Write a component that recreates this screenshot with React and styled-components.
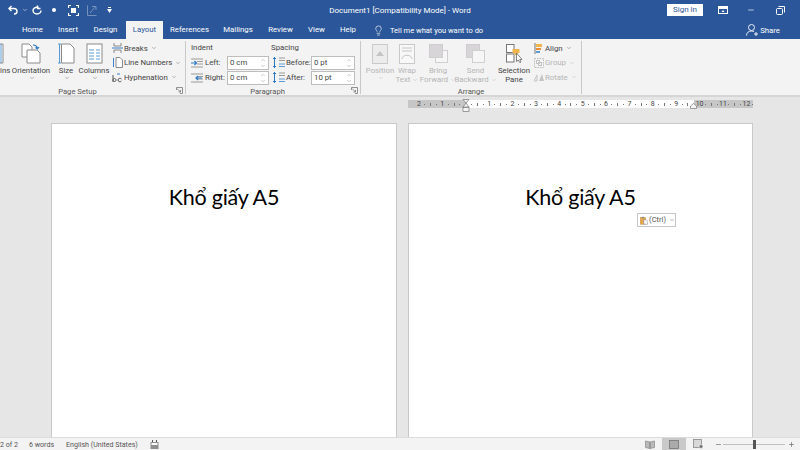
import React from 'react';
import styled, { createGlobalStyle } from 'styled-components';
import { ChevronDown, ChevronUp, Lightbulb, Minus, Plus } from 'lucide-react';

const GlobalStyle = createGlobalStyle`
  html, body { margin: 0; padding: 0; width: 800px; height: 450px; overflow: hidden; }
  body { font-family: Roboto, "Open Sans", sans-serif; font-size: 8px; color: #444; }
  * { box-sizing: border-box; }
`;

const Window = styled.div`
  width: 800px;
  height: 450px;
  display: flex;
  flex-direction: column;
  overflow: hidden;
  background: #e6e6e6;
`;

const TitleBar = styled.div`
  height: 20px;
  flex: none;
  background: #2b579a;
  color: #fff;
  display: grid;
  grid-template-columns: 1fr 180px 1fr;
  align-items: center;
`;

const Qat = styled.div`
  display: flex;
  align-items: center;
  padding-left: 8px;
  height: 100%;
`;

const QatItem = styled.div`
  width: ${p => p.$w}px;
  display: flex;
  align-items: center;
  opacity: ${p => (p.$off ? 0.35 : 1)};
`;

const DocTitle = styled.div`
  font-size: 8px;
  text-align: center;
  white-space: nowrap;
`;

const WinControls = styled.div`
  display: flex;
  align-items: center;
  justify-content: flex-end;
  height: 100%;
  padding-right: 13px;
`;

const SignIn = styled.div`
  width: 36px;
  height: 12px;
  background: #fff;
  color: #2b579a;
  font-size: 8px;
  line-height: 12px;
  text-align: center;
  margin-right: 14px;
`;

const WinBtn = styled.div`
  width: ${p => p.$w}px;
  display: flex;
  justify-content: center;
`;

const TabBar = styled.div`
  height: 19px;
  flex: none;
  background: #2b579a;
  display: flex;
  align-items: flex-end;
  padding-left: 14px;
`;

const Tab = styled.div`
  width: ${p => p.$w}px;
  height: 18px;
  line-height: 18px;
  text-align: center;
  font-size: 7.8px;
  white-space: nowrap;
  color: ${p => (p.$active ? '#2b579a' : '#fff')};
  background: ${p => (p.$active ? '#f3f3f3' : 'transparent')};
`;

const TellMe = styled.div`
  display: flex;
  align-items: center;
  gap: 6px;
  height: 18px;
  margin-left: 9px;
  color: #fff;
  font-size: 7.5px;
  white-space: nowrap;
`;

const Share = styled.div`
  margin-left: auto;
  margin-right: 20px;
  height: 18px;
  display: flex;
  align-items: center;
  gap: 1px;
  color: #fff;
  font-size: 7.8px;
`;

const Ribbon = styled.div`
  height: 58px;
  flex: none;
  background: #f3f3f3;
  border-bottom: 2px solid #d6d6d6;
  display: flex;
  overflow: hidden;
`;

const Group = styled.div`
  width: ${p => p.$w}px;
  flex: none;
  display: flex;
  flex-direction: column;
  border-right: 1px solid #c9c9c9;
  margin: 2px 0 1px;
  padding-left: ${p => p.$pl || 0}px;
`;

const GroupBody = styled.div`
  height: 45px;
  flex: none;
  display: flex;
`;

const GroupFoot = styled.div`
  height: 8px;
  position: relative;
  text-align: center;
  font-size: 7.6px;
  line-height: 11px;
  color: #555;
  padding-right: ${p => p.$pr || 0}px;
`;

const Launcher = styled.svg`
  position: absolute;
  right: 2px;
  top: 1px;
  width: 7px;
  height: 7px;
`;

const LargeBtn = styled.div`
  width: ${p => p.$w}px;
  flex: none;
  display: flex;
  flex-direction: column;
  align-items: center;
  font-size: 7.8px;
  line-height: 9.5px;
  text-align: center;
  white-space: nowrap;
  padding-top: 2px;
  color: ${p => (p.$off ? '#b5b5b5' : '#444')};
`;

const CutBtn = styled(LargeBtn)`
  align-items: flex-start;
`;

const LargeIcon = styled.div`
  height: 21px;
  display: flex;
  align-items: center;
  justify-content: center;
  margin-bottom: 1.5px;
`;

const Caret = styled(ChevronDown)`
  width: 6px;
  height: 6px;
  flex: none;
  color: ${p => (p.$off ? '#bbb' : '#777')};
  margin-left: 2px;
`;

const CaretLine = styled.div`
  display: flex;
  align-items: center;
`;

const SmallCol = styled.div`
  display: flex;
  flex-direction: column;
  margin-left: ${p => p.$ml || 0}px;
`;

const SmallBtn = styled.div`
  height: 14.5px;
  flex: none;
  display: flex;
  align-items: center;
  gap: 1px;
  font-size: 7.8px;
  white-space: nowrap;
  color: ${p => (p.$off ? '#b5b5b5' : '#444')};
`;

const FieldCol = styled.div`
  width: ${p => p.$w}px;
  flex: none;
  display: flex;
  flex-direction: column;
`;

const FieldHead = styled.div`
  height: 13px;
  line-height: 13px;
  font-size: 7.8px;
  padding-left: ${p => p.$pl || 0}px;
  margin-bottom: 1px;
`;

const FieldRow = styled.div`
  height: 15px;
  display: flex;
  align-items: center;
  font-size: 7.8px;
  gap: ${p => p.$gap || 2}px;
  padding-left: ${p => p.$pl || 0}px;
`;

const FieldLabel = styled.div`
  width: ${p => p.$w}px;
  flex: none;
  white-space: nowrap;
`;

const Spinner = styled.div`
  width: ${p => p.$w}px;
  height: 14px;
  background: #fff;
  border: 1px solid #bdbdbd;
  display: flex;
  align-items: center;
  justify-content: space-between;
  padding: 0 2px;
  font-size: 7.8px;
  color: #444;
`;

const SpinArrows = styled.div`
  display: flex;
  flex-direction: column;
  color: #777;
`;

const RulerRow = styled.div`
  position: relative;
  height: 26px;
  padding: 3px 0 0 408px;
  flex: none;
`;

const Ruler = styled.div`
  position: relative;
  width: 345px;
  height: 8px;
  background: #c6c6c6;
  display: flex;
  overflow: hidden;
`;

const RulerWhite = styled.div`
  position: absolute;
  left: 58px;
  top: 0;
  bottom: 0;
  width: 228px;
  background: #fff;
`;

const RulerScale = styled.div`
  position: relative;
  display: flex;
  margin-left: 8px;
`;

const RulerCell = styled.div`
  width: 23.4px;
  flex: none;
  display: grid;
  grid-template-columns: repeat(4, 5.85px);
  align-items: center;
  justify-items: center;
  font-size: 7px;
  line-height: 8px;
  color: #444;
`;

const Dot = styled.i`
  display: block;
  width: 1px;
  height: 1px;
  background: #777;
`;

const Tick = styled.i`
  display: block;
  width: 1px;
  height: 3px;
  background: #777;
`;

const Marker = styled.svg`
  position: absolute;
  left: ${p => p.$x}px;
  top: ${p => p.$y}px;
`;

const Workspace = styled.div`
  flex: 1;
  min-height: 0;
  display: flex;
  flex-direction: column;
  overflow: hidden;
`;

const Pages = styled.div`
  flex: 1;
  display: flex;
  gap: 11px;
  padding-left: 51px;
  min-height: 0;
  overflow: hidden;
`;

const Page = styled.div`
  position: relative;
  width: ${p => p.$w}px;
  height: 500px;
  flex: none;
  background: #fff;
  border: 1px solid #c8c8c8;
  padding-top: 59px;
  text-align: center;
  font-family: Lato, "Open Sans", sans-serif;
  font-size: 21.5px;
  letter-spacing: -0.25px;
  line-height: 28px;
  color: #000;
`;

const PasteTag = styled.div`
  position: absolute;
  left: 228px;
  top: 89px;
  width: 39px;
  height: 14px;
  background: #fff;
  border: 1px solid #c6c6c6;
  display: flex;
  align-items: center;
  gap: 1px;
  padding-left: 2px;
  font-family: Roboto, sans-serif;
  font-size: 7.5px;
  letter-spacing: 0;
  line-height: 12px;
  color: #555;
`;

const StatusBar = styled.div`
  height: 13px;
  flex: none;
  background: #f3f3f3;
  border-top: 1px solid #dcdcdc;
  display: flex;
  align-items: center;
  font-size: 7.1px;
  color: #555;
`;

const StatusText = styled.div`
  width: ${p => p.$w}px;
  flex: none;
  white-space: nowrap;
`;

const StatusRight = styled.div`
  margin-left: auto;
  height: 100%;
  padding-right: 5px;
  display: flex;
  align-items: center;
`;

const ViewBtn = styled.div`
  width: 24px;
  height: 100%;
  display: flex;
  align-items: center;
  justify-content: center;
  background: ${p => (p.$active ? '#c9c9c9' : 'transparent')};
  margin-right: ${p => p.$mr || 0}px;
`;

const Slider = styled.div`
  position: relative;
  width: 62px;
  height: 1px;
  background: #c0c0c0;
  margin: 0 3px 0 1px;
`;

const Thumb = styled.div`
  position: absolute;
  left: 30px;
  top: -4px;
  width: 3px;
  height: 9px;
  background: #555;
`;

const Launch = () => (
  <Launcher viewBox="0 0 7 7" fill="none" stroke="#777" strokeWidth="0.8">
    <path d="M.5 3V.5H6.5V6.5H4" />
    <path d="M1 1.5L4.5 5M4.5 3V5H2.5" />
  </Launcher>
);

const Spin = () => (
  <SpinArrows>
    <ChevronUp size={6} strokeWidth={1.5} />
    <ChevronDown size={6} strokeWidth={1.5} />
  </SpinArrows>
);

const OrientationIcon = () => (
  <svg width="21" height="21" viewBox="0 0 21 21" fill="none">
    <path d="M1 1H8L11 4V14H1Z" fill="#fff" stroke="#8a8a8a" />
    <path d="M6 7H16L19 10V20H6Z" fill="#fff" stroke="#8a8a8a" />
    <path d="M12 2C15 2 16 3 16.5 5.5M14.5 4.5L16.5 6L18 4" stroke="#2b79c2" strokeWidth="1.2" />
  </svg>
);

const SizeIcon = () => (
  <svg width="17" height="21" viewBox="0 0 17 21" fill="none">
    <path d="M1.5 1V20M0 1H3M0 20H3" stroke="#5a9bd5" />
    <path d="M3.5 1H12L16 5V20H3.5Z" fill="#fff" stroke="#8a8a8a" />
  </svg>
);

const ColumnsIcon = () => (
  <svg width="17" height="21" viewBox="0 0 17 21" fill="none">
    <rect x="1" y="1" width="15" height="19" fill="#fff" stroke="#8a8a8a" />
    <path d="M3 7H8M3 10H8M3 13H8M3 16H8M10 7H14M10 10H14M10 13H14M10 16H14" stroke="#5a9bd5" />
  </svg>
);

const MarginsEdge = () => (
  <svg width="4" height="21" viewBox="0 0 4 21" fill="none">
    <path d="M0 1H3V20H0" fill="#fff" stroke="#8a8a8a" />
    <path d="M1 1V20" stroke="#5a9bd5" />
  </svg>
);

const BreaksIcon = () => (
  <svg width="11" height="10" viewBox="0 0 11 10" fill="none">
    <path d="M2 0V3H9V0M2 10V7H9V10" stroke="#8a8a8a" />
    <path d="M0 5H11" stroke="#3b7fc4" />
  </svg>
);

const LineNumIcon = () => (
  <svg width="11" height="11" viewBox="0 0 11 11" fill="none">
    <path d="M4 .5H8L10.5 3V10.5H4Z" fill="#fff" stroke="#8a8a8a" />
    <path d="M1.5 1V10" stroke="#3b7fc4" />
  </svg>
);

const HyphenIcon = () => (
  <svg width="11" height="11" viewBox="0 0 11 11" fill="none">
    <path d="M1 3V10M1 8C1 6 4 6 4 8C4 10 1 10 1 8M9.5 7C8 5.5 6 6.5 6 8C6 9.5 8 10.5 9.5 9" stroke="#555" />
    <path d="M5 2H8" stroke="#3b7fc4" />
  </svg>
);

const IndentIcon = ({ right }) => (
  <svg width="12" height="10" viewBox="0 0 12 10" fill="none">
    <path d="M0 1H12M6 3.5H12M6 6H12M0 9H12" stroke="#9a9a9a" />
    <path d={right ? 'M11 5H5M7 3L5 5L7 7' : 'M0 5H5M3.5 3L5.5 5L3.5 7'} stroke="#2b79c2" strokeWidth="1.2" />
  </svg>
);

const SpacingIcon = () => (
  <svg width="13" height="11" viewBox="0 0 13 11" fill="none">
    <path d="M2.5 0V11M1 2L2.5 .5L4 2M1 9L2.5 10.5L4 9" stroke="#2b79c2" />
    <path d="M7 1H13M7 3.5H13" stroke="#9a9a9a" />
    <path d="M7 7H13M7 9.5H13" stroke="#5a9bd5" />
  </svg>
);

const PositionIcon = () => (
  <svg width="16" height="20" viewBox="0 0 16 20" fill="none">
    <rect x=".5" y=".5" width="15" height="19" fill="#ececec" stroke="#c9c9c9" />
    <path d="M4 12L8 7L12 12Z" fill="#c4c4c4" />
  </svg>
);

const WrapIcon = () => (
  <svg width="16" height="20" viewBox="0 0 16 20" fill="none">
    <rect x=".5" y=".5" width="15" height="19" fill="#f8f8f8" stroke="#c9c9c9" />
    <path d="M3 4H13M3 7H13M3 15C3 10 13 10 13 15" stroke="#c4c4c4" />
  </svg>
);

const LayerIcon = ({ front }) => (
  <svg width="19" height="19" viewBox="0 0 19 19" fill="none">
    {front ? (
      <>
        <rect x="6.5" y="6.5" width="12" height="12" fill="#f6f6f6" stroke="#cfcfcf" />
        <rect x=".5" y=".5" width="13" height="13" fill="#d8d5d8" stroke="#d0cdd0" />
      </>
    ) : (
      <>
        <rect x=".5" y=".5" width="13" height="13" fill="#d8d5d8" stroke="#d0cdd0" />
        <rect x="6.5" y="6.5" width="12" height="12" fill="#f6f6f6" stroke="#cfcfcf" />
      </>
    )}
  </svg>
);

const SelectionIcon = () => (
  <svg width="17" height="19" viewBox="0 0 17 19" fill="none">
    <rect x=".5" y=".5" width="7.5" height="8" fill="#fff" stroke="#777" />
    <rect x=".5" y="10" width="7.5" height="8" fill="#fff" stroke="#777" />
    <rect x="6.5" y="5" width="7" height="4" fill="#f0b44c" />
    <rect x="8.5" y="8" width="3" height="3" fill="#f0b44c" />
    <path d="M10.5 9V17.5L12.3 16L13.8 18.7L15 18L13.7 15.5H16Z" fill="#fff" stroke="#666" strokeWidth=".8" />
  </svg>
);

const AlignIcon = () => (
  <svg width="10" height="11" viewBox="0 0 10 11" fill="none">
    <path d="M1 0V11" stroke="#777" />
    <rect x="2" y="1" width="6" height="3" fill="#f0b44c" />
    <rect x="2" y="5" width="5" height="2" fill="#e98f3c" />
    <rect x="2" y="8" width="4" height="2" fill="#5a9bd5" />
  </svg>
);

const GroupIcon = () => (
  <svg width="10" height="10" viewBox="0 0 10 10" fill="none">
    <rect x=".5" y=".5" width="9" height="9" stroke="#bbb" strokeDasharray="1.5 1" />
    <rect x="2.5" y="2.5" width="3" height="3" stroke="#c4c4c4" />
    <rect x="4.5" y="4.5" width="3" height="3" stroke="#c4c4c4" />
  </svg>
);

const RotateIcon = () => (
  <svg width="10" height="10" viewBox="0 0 10 10" fill="none">
    <path d="M0 9L3 3V9Z" stroke="#c4c4c4" />
    <path d="M5 9L8 2L10 9Z" fill="#c4c4c4" />
  </svg>
);

const UndoIcon = () => (
  <svg width="10" height="10" viewBox="0 0 10 10" fill="none" stroke="#fff" strokeWidth="1.4">
    <path d="M1 3.5H6C8 3.5 9 5 9 6.5C9 8 8 9 6 9" />
    <path d="M3.5 1L1 3.5L3.5 6" />
  </svg>
);

const RedoIcon = () => (
  <svg width="10" height="10" viewBox="0 0 10 10" fill="none" stroke="#fff" strokeWidth="1.4">
    <path d="M6.5 2.5C3.5 1.5 1 3.5 1 5.5C1 7.5 3 9 5 9C7 9 9 7.5 9 5.5" />
    <path d="M5.5 .5V3.5H8.5" />
  </svg>
);

const FocusIcon = () => (
  <svg width="11" height="11" viewBox="0 0 11 11" fill="none" stroke="#fff">
    <path d="M.5 3V.5H3M8 .5H10.5V3M.5 8V10.5H3M8 10.5H10.5V8" strokeWidth="1.2" />
    <rect x="3" y="3" width="5" height="5" fill="#fff" stroke="none" />
  </svg>
);

const DisabledIcon = () => (
  <svg width="10" height="11" viewBox="0 0 10 11" fill="none" stroke="#fff">
    <path d="M.5 .5V10.5H9.5M3 8L9 1M5 1.5H9V5" />
  </svg>
);

const TouchIcon = () => (
  <svg width="5" height="6" viewBox="0 0 5 6" fill="#fff">
    <rect x="1" y="0" width="3" height="1" />
    <path d="M0 2H5L2.5 6Z" />
  </svg>
);

const DisplayIcon = () => (
  <svg width="10" height="8" viewBox="0 0 10 8">
    <rect x=".5" y=".5" width="9" height="7" fill="none" stroke="#fff" />
    <rect x="1" y="1" width="8" height="2" fill="#fff" />
    <path d="M3.5 6L5 4L6.5 6Z" fill="#fff" />
  </svg>
);

const RestoreIcon = () => (
  <svg width="9" height="9" viewBox="0 0 9 9" fill="none" stroke="#fff">
    <rect x=".5" y="2.5" width="6" height="6" rx="1" />
    <path d="M2.5 .5H8.5V6.5" />
  </svg>
);

const ShareIcon = () => (
  <svg width="13" height="12" viewBox="0 0 13 12" fill="none" stroke="#fff" strokeWidth=".9">
    <circle cx="5.5" cy="3.5" r="3" />
    <path d="M.5 11.5C.5 8.5 3 7 5.5 7C6.5 7 7.5 7.3 8 7.6" />
    <path d="M10 8V12M8 10H12" />
  </svg>
);

const MacroIcon = () => (
  <svg width="9" height="9" viewBox="0 0 9 9">
    <rect x=".5" y="2" width="8" height="7" fill="#8f8f8f" />
    <rect x="1.5" y="3" width="6" height="2" fill="#fff" />
    <rect x="2" y="0" width="1" height="2" fill="#555" />
    <rect x="6" y="0" width="1" height="2" fill="#555" />
  </svg>
);

const ReadIcon = () => (
  <svg width="10" height="9" viewBox="0 0 10 9" fill="#b9b9b9" stroke="#888" strokeWidth=".7">
    <path d="M.5 1L5 2V8.5L.5 7.5ZM9.5 1L5 2V8.5L9.5 7.5Z" />
  </svg>
);

const PrintIcon = () => (
  <svg width="10" height="9" viewBox="0 0 10 9" fill="#aaa" stroke="#777" strokeWidth=".8">
    <rect x=".5" y=".5" width="9" height="8" />
  </svg>
);

const WebIcon = () => (
  <svg width="11" height="10" viewBox="0 0 11 10" fill="none" stroke="#888" strokeWidth=".8">
    <rect x=".5" y=".5" width="8" height="8" fill="#d8d8d8" />
    <circle cx="8" cy="7.5" r="2" fill="#777" stroke="#fff" strokeWidth=".5" />
  </svg>
);

const PasteIcon = () => (
  <svg width="11" height="11" viewBox="0 0 11 11" fill="none">
    <rect x=".5" y="1.5" width="7" height="9" fill="#e9a84a" stroke="#b88231" strokeWidth=".6" />
    <rect x="2.5" y=".5" width="3" height="2" fill="#888" />
    <path d="M5 4.5H8.5L10.5 6.5V10.5H5Z" fill="#fff" stroke="#777" strokeWidth=".7" />
  </svg>
);

const tabs = [
  ['Home', 37],
  ['Insert', 34],
  ['Design', 41],
  ['Layout', 37, true],
  ['References', 53],
  ['Mailings', 44],
  ['Review', 41],
  ['View', 31],
  ['Help', 32],
];

const scale = ['2', '1', '', '1', '2', '3', '4', '5', '6', '7', '8', '9', '10', '11', '12'];

function App() {
  return (
    <Window>
      <GlobalStyle />
      <TitleBar>
        <Qat>
          <QatItem $w={14}><UndoIcon /></QatItem>
          <QatItem $w={10}><ChevronDown size={6} color="#fff" /></QatItem>
          <QatItem $w={20}><RedoIcon /></QatItem>
          <QatItem $w={16}><svg width="4" height="4"><circle cx="2" cy="2" r="2" fill="#fff" /></svg></QatItem>
          <QatItem $w={19}><FocusIcon /></QatItem>
          <QatItem $w={20} $off><DisabledIcon /></QatItem>
          <QatItem $w={8}><TouchIcon /></QatItem>
        </Qat>
        <DocTitle>Document1 [Compatibility Mode] - Word</DocTitle>
        <WinControls>
          <SignIn>Sign in</SignIn>
          <WinBtn $w={12}><DisplayIcon /></WinBtn>
          <WinBtn $w={44}><Minus size={8} color="#fff" /></WinBtn>
          <WinBtn $w={14}><RestoreIcon /></WinBtn>
        </WinControls>
      </TitleBar>

      <TabBar>
        {tabs.map(([name, w, active]) => (
          <Tab key={name} $w={w} $active={active}>{name}</Tab>
        ))}
        <TellMe>
          <Lightbulb size={11} strokeWidth={1.4} />
          Tell me what you want to do
        </TellMe>
        <Share><ShareIcon />Share</Share>
      </TabBar>

      <Ribbon>
        <Group $w={186}>
          <GroupBody>
            <CutBtn $w={11}>
              <LargeIcon><MarginsEdge /></LargeIcon>
              ins
            </CutBtn>
            <LargeBtn $w={40}>
              <LargeIcon><OrientationIcon /></LargeIcon>
              Orientation
              <Caret />
            </LargeBtn>
            <LargeBtn $w={30}>
              <LargeIcon><SizeIcon /></LargeIcon>
              Size
              <Caret />
            </LargeBtn>
            <LargeBtn $w={26}>
              <LargeIcon><ColumnsIcon /></LargeIcon>
              Columns
              <Caret />
            </LargeBtn>
            <SmallCol $ml={5}>
              <SmallBtn><BreaksIcon />Breaks<Caret /></SmallBtn>
              <SmallBtn><LineNumIcon />Line Numbers<Caret /></SmallBtn>
              <SmallBtn><HyphenIcon />Hyphenation<Caret /></SmallBtn>
            </SmallCol>
          </GroupBody>
          <GroupFoot $pr={30}>Page Setup<Launch /></GroupFoot>
        </Group>

        <Group $w={175} $pl={5}>
          <GroupBody>
            <FieldCol $w={79}>
              <FieldHead>Indent</FieldHead>
              <FieldRow>
                <IndentIcon />
                <FieldLabel $w={20}>Left:</FieldLabel>
                <Spinner $w={42}>0 cm<Spin /></Spinner>
              </FieldRow>
              <FieldRow>
                <IndentIcon right />
                <FieldLabel $w={20}>Right:</FieldLabel>
                <Spinner $w={42}>0 cm<Spin /></Spinner>
              </FieldRow>
            </FieldCol>
            <FieldCol $w={86}>
              <FieldHead $pl={1}>Spacing</FieldHead>
              <FieldRow $pl={2} $gap={1}>
                <SpacingIcon />
                <FieldLabel $w={24}>Before:</FieldLabel>
                <Spinner $w={44}>0 pt<Spin /></Spinner>
              </FieldRow>
              <FieldRow $pl={2} $gap={1}>
                <SpacingIcon />
                <FieldLabel $w={24}>After:</FieldLabel>
                <Spinner $w={44}>10 pt<Spin /></Spinner>
              </FieldRow>
            </FieldCol>
          </GroupBody>
          <GroupFoot $pr={16}>Paragraph<Launch /></GroupFoot>
        </Group>

        <Group $w={221} $pl={5}>
          <GroupBody>
            <LargeBtn $w={28} $off>
              <LargeIcon><PositionIcon /></LargeIcon>
              Position
              <Caret $off />
            </LargeBtn>
            <LargeBtn $w={26} $off>
              <LargeIcon><WrapIcon /></LargeIcon>
              Wrap
              <CaretLine>Text<Caret $off /></CaretLine>
            </LargeBtn>
            <LargeBtn $w={36} $off>
              <LargeIcon><LayerIcon front /></LargeIcon>
              Bring
              <CaretLine>Forward<Caret $off /></CaretLine>
            </LargeBtn>
            <LargeBtn $w={39} $off>
              <LargeIcon><LayerIcon /></LargeIcon>
              Send
              <CaretLine>Backward<Caret $off /></CaretLine>
            </LargeBtn>
            <LargeBtn $w={38}>
              <LargeIcon><SelectionIcon /></LargeIcon>
              Selection
              <div>Pane</div>
            </LargeBtn>
            <SmallCol $ml={1}>
              <SmallBtn><AlignIcon />Align<Caret /></SmallBtn>
              <SmallBtn $off><GroupIcon />Group<Caret $off /></SmallBtn>
              <SmallBtn $off><RotateIcon />Rotate<Caret $off /></SmallBtn>
            </SmallCol>
          </GroupBody>
          <GroupFoot $pr={5}>Arrange</GroupFoot>
        </Group>
      </Ribbon>

      <Workspace>
        <RulerRow>
          <Ruler>
            <RulerWhite />
            <RulerScale>
              {scale.map((n, i) => (
                <RulerCell key={i}>
                  <span>{n}</span>
                  <Dot />
                  <Tick />
                  <Dot />
                </RulerCell>
              ))}
            </RulerScale>
          </Ruler>
          <Marker $x={462} $y={2} width="8" height="15" viewBox="0 0 8 15" fill="#f3f3f3" stroke="#777" strokeWidth=".7">
            <path d="M1 .5H7L4 4Z" />
            <path d="M4 4L7 8H1Z" />
            <rect x="1" y="8.5" width="6" height="4" />
          </Marker>
          <Marker $x={690} $y={6} width="7" height="6" viewBox="0 0 7 6" fill="#f3f3f3" stroke="#777" strokeWidth=".7">
            <path d="M3.5 .5L6.5 3V5.5H.5V3Z" />
          </Marker>
        </RulerRow>
        <Pages>
          <Page $w={346}>Khổ giấy A5</Page>
          <Page $w={345}>
            Khổ giấy A5
            <PasteTag>
              <PasteIcon />
              (Ctrl)
              <Caret />
            </PasteTag>
          </Page>
        </Pages>
        <StatusBar>
          <StatusText $w={29}>2 of 2</StatusText>
          <StatusText $w={37}>6 words</StatusText>
          <StatusText $w={84}>English (United States)</StatusText>
          <MacroIcon />
          <StatusRight>
            <ViewBtn><ReadIcon /></ViewBtn>
            <ViewBtn $active><PrintIcon /></ViewBtn>
            <ViewBtn $mr={5}><WebIcon /></ViewBtn>
            <Minus size={7} color="#555" />
            <Slider><Thumb /></Slider>
            <Plus size={7} color="#555" />
          </StatusRight>
        </StatusBar>
      </Workspace>
    </Window>
  );
}

export default App;
